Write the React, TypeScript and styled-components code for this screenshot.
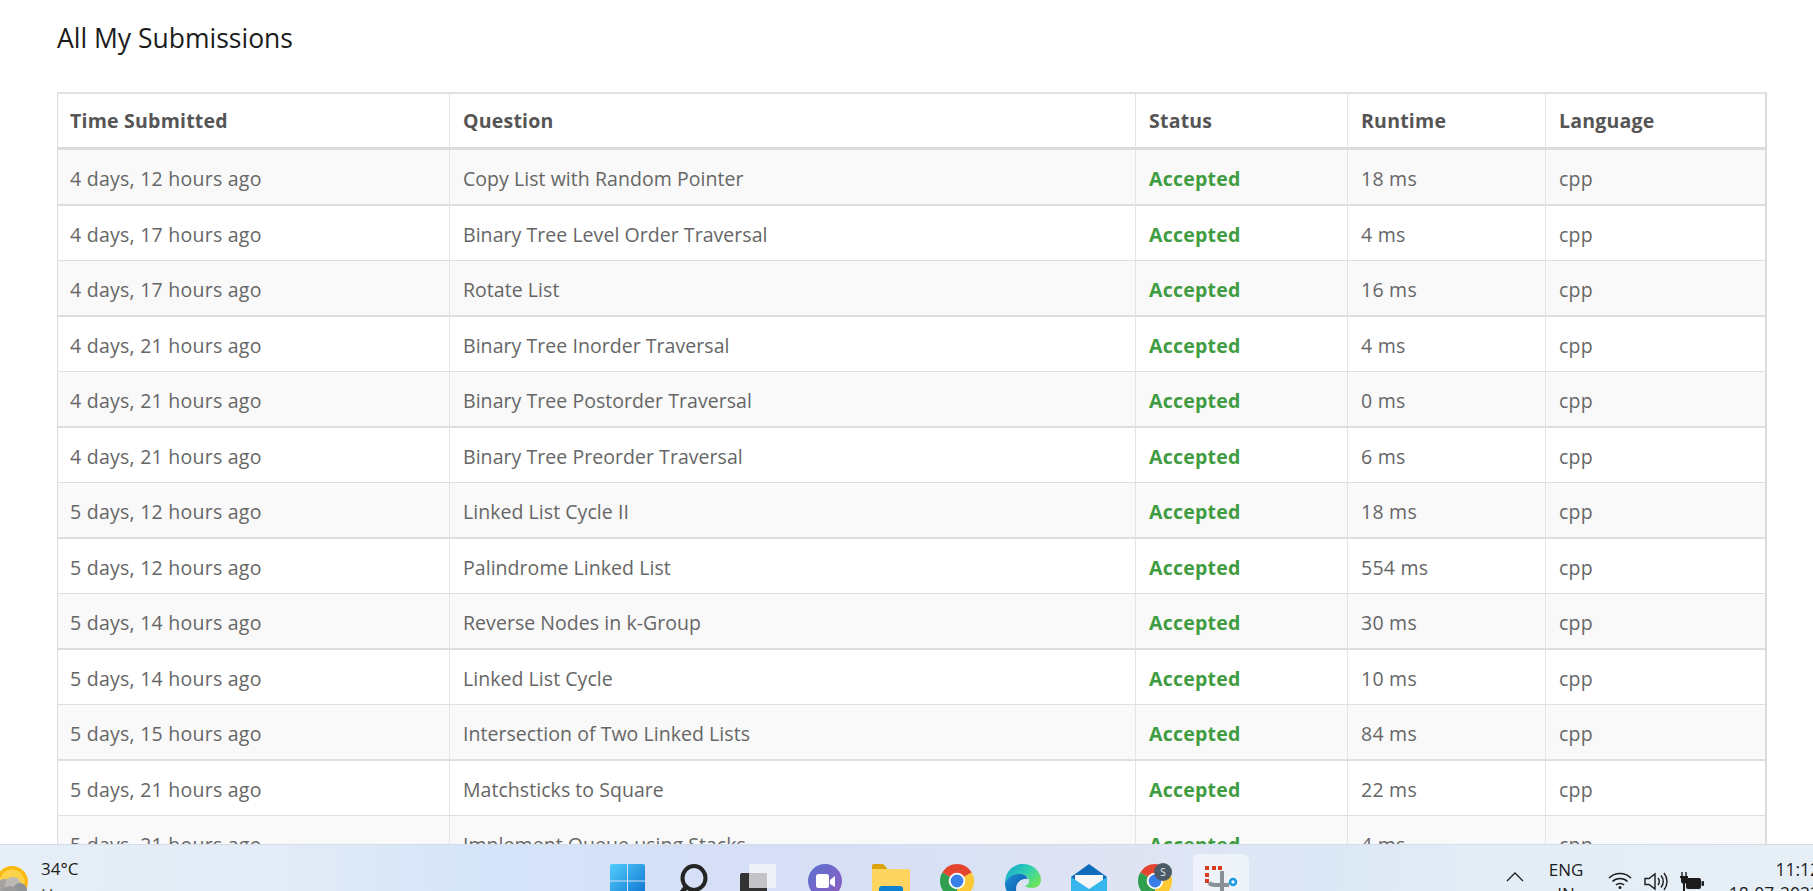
import React from 'react';
import styled, { createGlobalStyle } from 'styled-components';

const Global = createGlobalStyle`
  html, body { margin: 0; padding: 0; height: 100%; overflow: hidden; background: #fff; }
  #root { height: 100%; }
`;
const Screen = styled.div`
  height: 891px; display: flex; flex-direction: column; overflow: hidden;
  font-family: "Open Sans", "Noto Sans", sans-serif;
`;
const Page = styled.main`
  flex: 1; min-height: 0; overflow: hidden; padding: 20px 47px 0 57px;
`;
const Title = styled.h1`
  margin: 0 0 36px; font-size: 26.5px; line-height: 36px; font-weight: 500; color: #1c1c1c;
`;
const Table = styled.table`
  width: 1709px; table-layout: fixed; border-collapse: separate; border-spacing: 0;
  border-top: 2px solid #e2e2e2; border-left: 1px solid #dcdcdc; border-right: 2px solid #dcdcdc;
`;
const Col = styled.col<{ $w: number }>`width: ${p => p.$w}px;`;
const Th = styled.th`
  height: 56px; box-sizing: border-box; padding: 0 12px 0 13px; text-align: left;
  border-bottom: 3px solid #dcdcdc; border-left: 1px solid #e4e4e4;
  font-size: 19.5px; font-weight: 700; color: #555; letter-spacing: 0.22px;
  &:first-child { border-left: 0; padding-left: 12px; }
`;
const Row = styled.tr<{ $odd: boolean }>`
  background: ${p => (p.$odd ? '#f9f9f9' : '#fff')};
  & > td { height: ${p => (p.$odd ? 56 : 55)}px; border-bottom: ${p => (p.$odd ? 2 : 1)}px solid #dedede; }
`;
const Td = styled.td`
  box-sizing: border-box; padding: 2px 12px 0 13px; border-left: 1px solid #e4e4e4;
  font-size: 19.5px; font-weight: 400; color: #666; letter-spacing: 0.25px; white-space: nowrap;
  &:first-child { border-left: 0; padding-left: 12px; }
`;
const QuestionTd = styled(Td)`
  letter-spacing: 0.05px;
`;
const Accepted = styled.strong`
  color: #3f9c41; font-weight: 700; letter-spacing: 0.22px;
`;
const Taskbar = styled.footer`
  flex: 0 0 47px; height: 47px; box-sizing: border-box; overflow: hidden; position: relative;
  border-top: 1px solid #d3dde9;
  background: linear-gradient(90deg, #e6eff7 0%, #e3ecf7 15%, #d5e4f9 27%, #d5dff6 38%, #d7e0f5 50%, #dfe4f3 62%, #dce7f6 72%, #e2edf6 82%, #e6eff6 100%);
  display: grid; grid-template-columns: 594px 660px 1fr;
  color: #1d1d1d; font-size: 16px;
`;
const Weather = styled.div`
  display: flex; align-items: flex-start; padding-top: 21px; margin-left: -4px; gap: 13px;
  & > svg { flex: none; }
`;
const WeatherText = styled.div`
  line-height: 26px; margin-top: -10px; font-size: 17px;
`;
const Dim = styled.div`color: #444;`;
const Apps = styled.div`display: flex; align-items: flex-start;`;
const Slot = styled.div<{ $active?: boolean }>`
  position: relative; width: 66px; flex: none; display: flex; justify-content: center; padding-top: ${p => (p.$active ? 10 : 19)}px;
  height: 60px; box-sizing: border-box;
  ${p => p.$active ? `
    & > span { display: flex; justify-content: center; width: 56px; height: 60px; padding-top: 9px; margin-top: -1px; box-sizing: border-box; background: rgba(255,255,255,.5); border-radius: 6px; }
  ` : ''}
`;
const Tray = styled.div`
  display: flex; align-items: flex-start; padding-top: 0; white-space: nowrap;
`;
const Chevron = styled.svg`margin: 27px 0 0 252px; flex: none;`;
const Lang = styled.div`
  width: 54px; margin-left: 15px; text-align: center; line-height: 24px; padding-top: 13px; font-size: 17px; flex: none;
`;
const Icons = styled.div`
  display: flex; gap: 12px; margin-left: 15px; padding-top: 27px; flex: none;
`;
const Clock = styled.div`
  flex: none; width: 100px; margin-left: 16px; text-align: right; line-height: 24px; padding-top: 12px; font-size: 17.5px;
`;

const rows = [
  ['4 days, 12 hours ago', 'Copy List with Random Pointer', '18 ms'],
  ['4 days, 17 hours ago', 'Binary Tree Level Order Traversal', '4 ms'],
  ['4 days, 17 hours ago', 'Rotate List', '16 ms'],
  ['4 days, 21 hours ago', 'Binary Tree Inorder Traversal', '4 ms'],
  ['4 days, 21 hours ago', 'Binary Tree Postorder Traversal', '0 ms'],
  ['4 days, 21 hours ago', 'Binary Tree Preorder Traversal', '6 ms'],
  ['5 days, 12 hours ago', 'Linked List Cycle II', '18 ms'],
  ['5 days, 12 hours ago', 'Palindrome Linked List', '554 ms'],
  ['5 days, 14 hours ago', 'Reverse Nodes in k-Group', '30 ms'],
  ['5 days, 14 hours ago', 'Linked List Cycle', '10 ms'],
  ['5 days, 15 hours ago', 'Intersection of Two Linked Lists', '84 ms'],
  ['5 days, 21 hours ago', 'Matchsticks to Square', '22 ms'],
  ['5 days, 21 hours ago', 'Implement Queue using Stacks', '4 ms'],
];

const WinLogo = () => (
  <svg width="35" height="35" viewBox="0 0 35 35">
    <defs>
      <linearGradient id="wl" x1="0" y1="0" x2="1" y2="1"><stop offset="0" stopColor="#52cdfb" /><stop offset="1" stopColor="#0a70d0" /></linearGradient>
    </defs>
    <path fill="url(#wl)" d="M2 0h15v16.5H0V2a2 2 0 0 1 2-2zM18 0h15a2 2 0 0 1 2 2v14.5H18zM0 17.5h17V35H2a2 2 0 0 1-2-2zM18 17.5h17V33a2 2 0 0 1-2 2H18z" />
  </svg>
);
const SearchIcon = () => (
  <svg width="30" height="34" viewBox="0 0 30 34" fill="none">
    <ellipse cx="16" cy="14" rx="11.5" ry="12" stroke="#242424" strokeWidth="4" />
    <path d="M8 23 2 31" stroke="#242424" strokeWidth="5" strokeLinecap="round" />
  </svg>
);
const TaskView = () => (
  <svg width="38" height="36" viewBox="0 0 38 36">
    <rect x="0" y="9" width="27" height="27" rx="2" fill="#333" />
    <rect x="9" y="0" width="27" height="24" rx="2" fill="#f3f4f8" fillOpacity=".88" />
    <rect x="9" y="9" width="18" height="15" fill="#c4c4c6" />
  </svg>
);
const Meet = () => (
  <svg width="34" height="34" viewBox="0 0 34 34">
    <defs><linearGradient id="mt" x1="0" y1="0" x2="1" y2="1"><stop offset="0" stopColor="#5b6fd0" /><stop offset="1" stopColor="#8d5fc0" /></linearGradient></defs>
    <circle cx="17" cy="17" r="17" fill="url(#mt)" />
    <rect x="8" y="10" width="13" height="14" rx="2.5" fill="#fff" />
    <path d="M22 16l5-4v11l-5-3z" fill="#fff" />
  </svg>
);
const Folder = () => (
  <svg width="38" height="34" viewBox="0 0 38 34">
    <path d="M0 2a2 2 0 0 1 2-2h9l4 4v8H0z" fill="#dba30d" />
    <path d="M0 5h36a2 2 0 0 1 2 2v27H0z" fill="#fdd45f" />
    <rect x="7" y="22" width="24" height="14" rx="3" fill="#0f7fd2" />
  </svg>
);
const Chrome = ({ id }: { id: string }) => (
  <svg width="34" height="34" viewBox="0 0 34 34" aria-label={id}>
    <path d="M17 17 2.3 8.5A17 17 0 0 1 31.7 8.5z" fill="#e5452f" />
    <path d="M17 17 31.7 8.5A17 17 0 0 1 17 34z" fill="#fcc934" />
    <path d="M17 17 17 34A17 17 0 0 1 2.3 8.5z" fill="#2f9e4f" />
    <circle cx="17" cy="17" r="8.3" fill="#fff" />
    <circle cx="17" cy="17" r="6.4" fill="#3a7ee8" />
  </svg>
);
const BadgeDot = styled.span`
  position: absolute; left: 32px; top: 18px; width: 18px; height: 18px; border-radius: 50%;
  background: #4a5a66; color: #e9edf0; font-size: 10px; line-height: 18px; text-align: center;
`;
const ChromeBadged = () => (
  <span>
    <Chrome id="chrome-profile" />
    <BadgeDot>S</BadgeDot>
  </span>
);
const Edge = () => (
  <svg width="36" height="36" viewBox="0 0 36 36">
    <defs>
      <linearGradient id="eg" x1="0" y1="0" x2="1" y2=".7"><stop offset="0" stopColor="#12a3d8" /><stop offset=".55" stopColor="#2fd0b0" /><stop offset="1" stopColor="#6fe45a" /></linearGradient>
      <linearGradient id="eb" x1="0" y1="0" x2="1" y2="1"><stop offset="0" stopColor="#1a8fd6" /><stop offset="1" stopColor="#0b4f9e" /></linearGradient>
    </defs>
    <path d="M18 0c10 0 18 7.500 18 16 0 5-4 8-9 8-3 0-6-1-7-2 3-1 4-3 4-5 0-4-4-7-9-7C9 10 3 13 0 19 0 8 8 0 18 0z" fill="url(#eg)" />
    <path d="M0 19c3-6 8-9 15-9 4 0 7 2 8 5-6-1-12 3-12 10 0 4 2 8 6 11C7 36 0 29 0 19z" fill="url(#eb)" />
  </svg>
);
const Mail = () => (
  <svg width="36" height="34" viewBox="0 0 36 34">
    <path d="M18 0 36 13v21H0V13z" fill="#0f6cbd" />
    <path d="M4 11h28v9l-14 8-14-8z" fill="#f4f6f8" />
    <path d="M0 13l18 12 18-12v21H0z" fill="#37b6ee" />
  </svg>
);
const Snip = () => (
  <svg width="38" height="38" viewBox="0 0 38 38" fill="none">
    <rect x="0" y="0" width="27" height="28" fill="#eef1f6" />
    <rect x="3" y="3" width="4" height="4" fill="#d83b1e" />
    <rect x="10" y="3" width="4" height="4" fill="#d83b1e" />
    <rect x="16" y="3" width="4" height="4" fill="#d83b1e" />
    <rect x="3" y="10" width="4" height="4" fill="#d83b1e" />
    <rect x="3" y="16" width="4" height="4" fill="#d83b1e" />
    <path d="M20 8v26" stroke="#8a9097" strokeWidth="4" />
    <path d="M7 20q2 2 6 2h14" stroke="#8a9097" strokeWidth="4" />
    <circle cx="31" cy="19" r="3" stroke="#1a9ae0" strokeWidth="2.500" />
  </svg>
);
const WeatherIcon = () => (
  <svg width="32" height="30" viewBox="0 0 32 30">
    <circle cx="16" cy="16" r="16" fill="#f9b90f" />
    <circle cx="16" cy="16" r="12.500" fill="#fbd34a" />
    <circle cx="9" cy="22" r="9" fill="#a5a3a0" />
    <circle cx="17" cy="19" r="8" fill="#bdb9b3" />
    <circle cx="24" cy="24" r="7" fill="#8f9296" />
    <circle cx="14" cy="29" r="9" fill="#9a9a9a" />
  </svg>
);

export default function App() {
  return (
    <Screen>
      <Global />
      <Page>
        <Title>All My Submissions</Title>
        <Table>
          <colgroup>
            <Col $w={391} /><Col $w={686} /><Col $w={212} /><Col $w={198} /><Col $w={220} />
          </colgroup>
          <thead>
            <tr>
              <Th>Time Submitted</Th><Th>Question</Th><Th>Status</Th><Th>Runtime</Th><Th>Language</Th>
            </tr>
          </thead>
          <tbody>
            {rows.map((r, i) => (
              <Row key={i} $odd={i % 2 === 0}>
                <Td>{r[0]}</Td>
                <QuestionTd>{r[1]}</QuestionTd>
                <Td><Accepted>Accepted</Accepted></Td>
                <Td>{r[2]}</Td>
                <Td>cpp</Td>
              </Row>
            ))}
          </tbody>
        </Table>
      </Page>
      <Taskbar>
        <Weather>
          <WeatherIcon />
          <WeatherText>34°C<Dim>Haze</Dim></WeatherText>
        </Weather>
        <Apps>
          <Slot><WinLogo /></Slot>
          <Slot><SearchIcon /></Slot>
          <Slot><TaskView /></Slot>
          <Slot><Meet /></Slot>
          <Slot><Folder /></Slot>
          <Slot><Chrome id="chrome" /></Slot>
          <Slot><Edge /></Slot>
          <Slot><Mail /></Slot>
          <Slot><ChromeBadged /></Slot>
          <Slot $active><span><Snip /></span></Slot>
        </Apps>
        <Tray>
          <Chevron width="18" height="10" viewBox="0 0 18 10" fill="none">
            <path d="M1 9l8-8 8 8" stroke="#222" strokeWidth="1.3" />
          </Chevron>
          <Lang>ENG<div>IN</div></Lang>
          <Icons>
            <svg width="24" height="17" viewBox="0 0 24 17" fill="none" stroke="#1c1c1c" strokeWidth="1.5">
              <path d="M1 6c6-6 16-6 22 0M4.500 9.500c4-4 11-4 15 0M8 13c2-2 6-2 8 0" />
              <circle cx="12" cy="15.500" r="1.500" fill="#1c1c1c" stroke="none" />
            </svg>
            <svg width="24" height="19" viewBox="0 0 24 19" fill="none" stroke="#1c1c1c" strokeWidth="1.4">
              <path d="M1 6.500h4L11 2v15l-6-4.500H1z" />
              <path d="M14 6c1.500 2 1.500 5 0 7M17 3.500c3 3.500 3 8.500 0 12M20 1c4 5 4 12 0 17" />
            </svg>
            <svg width="24" height="20" viewBox="0 0 24 20" fill="#1c1c1c">
              <path d="M2 0v4M6 0v4" stroke="#1c1c1c" strokeWidth="1.4" />
              <path d="M0 4h8v2H7v3a3 3 0 0 1-2 2.800V20H3v-8.200A3 3 0 0 1 1 9V6H0z" />
              <rect x="6" y="6" width="15" height="11" rx="2" />
              <rect x="21.500" y="9" width="2.500" height="5" rx="1" />
            </svg>
          </Icons>
          <Clock>11:12<div>18-07-2023</div></Clock>
        </Tray>
      </Taskbar>
    </Screen>
  );
}
